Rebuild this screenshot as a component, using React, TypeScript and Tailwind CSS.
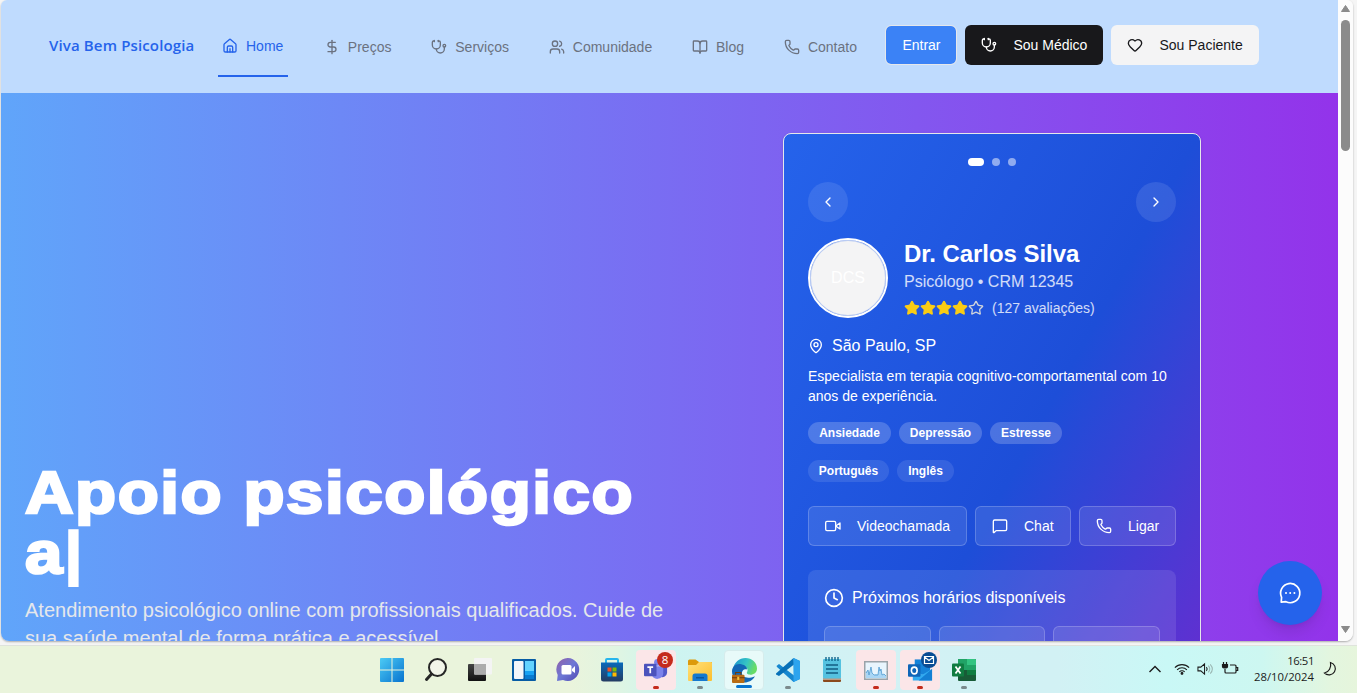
import React from "react";
import {
  BookOpen, ChevronLeft, ChevronRight, Clock, DollarSign, Heart, MapPin, MessageSquare, Phone, Star,
  Stethoscope, Users,
} from "lucide-react";

const House = () => (
  <svg width="16" height="16" viewBox="0 0 24 24" fill="none" stroke="currentColor" strokeWidth="2" strokeLinecap="round" strokeLinejoin="round">
    <path d="M3 10a2 2 0 0 1 .7-1.5l7-6a2 2 0 0 1 2.6 0l7 6A2 2 0 0 1 21 10v9a2 2 0 0 1-2 2H5a2 2 0 0 1-2-2z" />
    <path d="M8 21v-7a2 2 0 0 1 2-2h4a2 2 0 0 1 2 2v7M12 16v5" />
  </svg>
);

const VideoCamera = () => (
  <svg width="16" height="16" viewBox="0 0 24 24" fill="none" stroke="currentColor" strokeWidth="2" strokeLinecap="round" strokeLinejoin="round">
    <rect x="1" y="5" width="15" height="14" rx="2" />
    <path d="m16 12 6.500 4.500v-9z" />
  </svg>
);

const navItems = [
  { label: "Preços", icon: <DollarSign size={16} /> },
  { label: "Serviços", icon: <Stethoscope size={16} /> },
  { label: "Comunidade", icon: <Users size={16} /> },
  { label: "Blog", icon: <BookOpen size={16} /> },
  { label: "Contato", icon: <Phone size={16} /> },
];

function Header() {
  return (
    <header className="flex h-[93px] shrink-0 items-start bg-[#bfdbfe] pl-12 text-sm">
      <div className="mt-[33px] w-[145px] whitespace-nowrap font-['Open_Sans',sans-serif] text-[15px] font-semibold leading-6 tracking-[0.14px] text-[#2563eb]">
        Viva Bem Psicologia
      </div>
      <nav className="ml-6 flex gap-[31.85px] text-[#6b7280]">
        <a className="flex h-[77px] w-[70px] items-center gap-2 border-b-2 border-[#2563eb] px-1 pt-[17px] text-[#2563eb]">
          <House />
          Home
        </a>
        {navItems.map((n) => (
          <a key={n.label} className="flex h-[77px] items-center gap-2 px-1 pt-[17px]">
            {n.icon}
            {n.label}
          </a>
        ))}
      </nav>
      <div className="ml-[24.5px] mt-[25px] flex items-center gap-2">
        <button className="h-10 w-[72px] rounded-md border border-[#e5e7eb] bg-[#3b82f6] bg-clip-padding text-white">Entrar</button>
        <button className="flex h-10 w-[138px] items-center gap-4 whitespace-nowrap rounded-md bg-[#18181b] px-4 text-white">
          <Stethoscope size={16} className="shrink-0" />
          Sou Médico
        </button>
        <button className="flex h-10 w-[148px] items-center gap-4 whitespace-nowrap rounded-md bg-[#f4f4f5] px-4 text-[#18181b]">
          <Heart size={16} className="shrink-0" />
          Sou Paciente
        </button>
      </div>
    </header>
  );
}

function DoctorCard() {
  return (
    <section className="mt-10 h-[755px] w-[418px] shrink-0 rounded-lg border border-[#e5e7eb] bg-[linear-gradient(to_bottom_right,#2563eb,#1d4ed8,#7e22ce)] p-6 text-white shadow-sm">
      <div className="flex h-2 justify-center gap-2">
        <i className="w-4 rounded-full bg-white" />
        <i className="w-2 rounded-full bg-white/50" />
        <i className="w-2 rounded-full bg-white/50" />
      </div>
      <div className="mt-4 flex justify-between">
        <button className="flex size-10 items-center justify-center rounded-full bg-white/10"><ChevronLeft size={16} /></button>
        <button className="flex size-10 items-center justify-center rounded-full bg-white/10"><ChevronRight size={16} /></button>
      </div>
      <div className="mt-4 flex gap-4">
        <div className="flex size-20 items-center justify-center rounded-full border-2 border-white bg-[#f4f4f5] bg-clip-padding text-base ring-inset ring-1 ring-[#2563eb]/25">
          DCS
        </div>
        <div>
          <h2 className="text-2xl font-bold leading-8 tracking-[-0.05px]">Dr. Carlos Silva</h2>
          <p className="text-base leading-6 text-white/80">Psicólogo • CRM 12345</p>
          <div className="mt-1 flex h-5 items-center text-sm text-white/80">
            {[0, 1, 2, 3].map((i) => <Star key={i} size={16} className="fill-[#facc15] text-[#facc15]" />)}
            <Star size={16} className="text-[#d1d5db]" />
            <span className="ml-2">(127 avaliações)</span>
          </div>
        </div>
      </div>
      <div className="mt-4 flex items-center gap-2 text-base leading-6"><MapPin size={16} />São Paulo, SP</div>
      <p className="mt-2 text-sm leading-5">Especialista em terapia cognitivo-comportamental com 10 anos de experiência.</p>
      <div className="mt-4 flex gap-2 text-xs font-bold leading-[22px]">
        <span className="w-[83px] rounded-full bg-white/20 text-center">Ansiedade</span>
        <span className="w-[83px] rounded-full bg-white/20 text-center">Depressão</span>
        <span className="w-[72px] rounded-full bg-white/20 text-center">Estresse</span>
      </div>
      <div className="mt-4 flex gap-2 text-xs font-bold leading-[22px]">
        <span className="w-[81px] rounded-full bg-white/10 text-center">Português</span>
        <span className="w-[57px] rounded-full bg-white/10 text-center">Inglês</span>
      </div>
      <div className="mt-6 flex h-10 gap-2 text-sm">
        <button className="flex w-[159px] items-center gap-4 rounded-md border border-white/20 bg-white/10 pl-4"><VideoCamera />Videochamada</button>
        <button className="flex w-[96px] items-center gap-4 rounded-md border border-white/20 bg-white/10 pl-4"><MessageSquare size={16} />Chat</button>
        <button className="flex w-[97px] items-center gap-4 rounded-md border border-white/20 bg-white/10 pl-4"><Phone size={16} />Ligar</button>
      </div>
      <div className="mt-6 h-[200px] rounded-lg bg-white/10 p-4">
        <div className="flex items-center gap-2 text-base leading-6"><Clock size={20} />Próximos horários disponíveis</div>
        <div className="mt-4 grid grid-cols-3 gap-2">
          {[0, 1, 2].map((i) => <div key={i} className="h-10 rounded-md border border-white/20 bg-white/10" />)}
        </div>
      </div>
    </section>
  );
}

function Hero() {
  return (
    <main className="relative flex min-h-0 flex-1 items-start overflow-hidden bg-[linear-gradient(to_right,#60a5fa,#9333ea)]">
      <div className="w-[782px] shrink-0 pl-6 pt-[370px]">
        <h1 className="w-[620px] origin-left scale-x-[1.12] whitespace-nowrap text-[60px] font-bold leading-[60px] tracking-[1.4px] text-white [-webkit-text-stroke:2.5px_white]">
          Apoio psicológico
          <br />
          a<span className="[-webkit-text-stroke:1.5px_white]">|</span>
        </h1>
        <p className="mt-[13px] w-[660px] text-xl leading-7 text-[#e5e7eb]">
          Atendimento psicológico online com profissionais qualificados. Cuide de sua saúde mental de forma prática e acessível.
        </p>
      </div>
      <DoctorCard />
      <button className="absolute bottom-4 right-4 flex size-16 items-center justify-center rounded-full bg-[#2563eb] text-white shadow-lg">
        <svg width="24" height="24" viewBox="0 0 24 24" fill="none" stroke="currentColor" strokeWidth="1.700" strokeLinejoin="round">
          <path d="M3.200 21.200 3.600 16.300A9.600 9.600 0 1 1 8 20.700z" />
          <path d="M8 12h.01M12.200 12h.01M16.400 12h.01" strokeLinecap="round" strokeWidth="2" />
        </svg>
      </button>
    </main>
  );
}

function Scrollbar() {
  return (
    <div className="flex w-[15px] flex-col items-center bg-[#fcfcfc] pt-[5px]">
      <svg width="9" height="7" viewBox="0 0 9 7"><path d="M4.500 0.500 8.500 6.500H.5z" fill="#8b8b8b" stroke="#8b8b8b" strokeLinejoin="round" /></svg>
      <i className="mt-2 h-[131px] w-[9px] rounded-full bg-[#8b8b8b]" />
      <svg className="mb-[8px] mt-auto" width="9" height="7" viewBox="0 0 9 7"><path d="M4.500 6.500 8.500 .5H.5z" fill="#8b8b8b" stroke="#8b8b8b" strokeLinejoin="round" /></svg>
    </div>
  );
}

const WindowsLogo = () => (
  <svg width="24" height="24" viewBox="0 0 24 24">
    <defs><linearGradient id="win" x1="0" y1="0" x2="1" y2="1"><stop stopColor="#4ccbf5" /><stop offset="1" stopColor="#0873cf" /></linearGradient></defs>
    <path fill="url(#win)" d="M1 0h10.5v11.5H0V1a1 1 0 0 1 1-1zM12.5 0H23a1 1 0 0 1 1 1v10.5H12.5zM0 12.5h11.5V24H1a1 1 0 0 1-1-1zM12.5 12.5H24V23a1 1 0 0 1-1 1H12.5z" />
  </svg>
);
const SearchIcon = () => (
  <svg width="24" height="24" viewBox="0 0 24 24" fill="none" stroke="#262626">
    <circle cx="13.5" cy="9.5" r="8.5" strokeWidth="2" fill="#f2f5e9" /><path d="m7.5 16-5 5.5" strokeWidth="3" strokeLinecap="round" />
  </svg>
);
const TaskView = () => (
  <svg width="24" height="24" viewBox="0 0 24 24">
    <defs><linearGradient id="tv" x1="0" y1="0" x2="0" y2="1"><stop stopColor="#444" /><stop offset="1" stopColor="#111" /></linearGradient></defs>
    <rect y="6" width="18" height="17" rx="1" fill="url(#tv)" /><rect x="6" width="18" height="16.500" rx="1" fill="#f4f4f4" /><path d="M6 6h12v10.500H7a1 1 0 0 1-1-1z" fill="#acacac" />
  </svg>
);
const Widgets = () => (
  <svg width="24" height="22" viewBox="0 0 24 22">
    <rect width="24" height="22" rx="1" fill="#075ca5" /><rect x="2" y="2" width="9.500" height="18" rx="1" fill="#f3f6fa" />
    <path d="M13 2h9v10h-9z" fill="#63d3ff" /><path d="M13 12h9v4h-9z" fill="#16a1f3" /><path d="M13 16h9v4h-9z" fill="#087bd1" />
  </svg>
);
const ChatIcon = () => (
  <svg width="24" height="24" viewBox="0 0 24 24">
    <defs><linearGradient id="ch" x1="0" y1="0" x2="1" y2="1"><stop stopColor="#9360a8" /><stop offset=".5" stopColor="#6d78d6" /><stop offset="1" stopColor="#5149b2" /></linearGradient></defs>
    <path d="M12 0a11.500 11.500 0 1 1-5 22L1 23l.7-6A11.500 11.500 0 0 1 12 0z" fill="url(#ch)" />
    <rect x="5.500" y="7" width="10" height="9.500" rx="1.500" fill="#fff" /><path d="m16 11 3-3v7l-3-2z" fill="#fff" />
  </svg>
);
const StoreIcon = () => (
  <svg width="24" height="24" viewBox="0 0 24 24">
    <defs><linearGradient id="st" x1="0" y1="0" x2="0" y2="1"><stop stopColor="#0969ba" /><stop offset="1" stopColor="#243c62" /></linearGradient></defs>
    <path d="M6 8V2q0-1 1-1h10q1 0 1 1v6" fill="none" stroke="#26b5ed" strokeWidth="2" />
    <path d="M1 4.500h22V21q0 2.500-2.500 2.500h-17Q1 23.500 1 21z" fill="url(#st)" />
    <path fill="#f25022" d="M7.500 9.500h4v4h-4z" /><path fill="#7fba00" d="M12.500 9.500h4v4h-4z" /><path fill="#00a4ef" d="M7.500 14.500h4v4h-4z" /><path fill="#ffb900" d="M12.500 14.500h4v4h-4z" />
  </svg>
);
const TeamsIcon = () => (
  <svg width="25" height="24" viewBox="0 0 26 24">
    <circle cx="14" cy="4" r="3.500" fill="#7b83eb" /><path d="M17 8h7v7a5 5 0 0 1-7 4z" fill="#5059c9" /><path d="M8 8h12v8a6.200 6.200 0 0 1-12 1z" fill="#7b83eb" />
    <rect y="5.500" width="13" height="13" rx="1" fill="#4b53bc" /><path d="M3.500 9h6M6.500 9v6.500" stroke="#fff" strokeWidth="1.800" />
  </svg>
);
const FolderIcon = () => (
  <svg width="24" height="24" viewBox="0 0 24 24">
    <defs><linearGradient id="fo" x1="0" y1="0" x2="1" y2="1"><stop stopColor="#ffe07a" /><stop offset="1" stopColor="#fcbf2e" /></linearGradient></defs>
    <path d="M0 3q0-1.500 1.500-1.500h6L11 4H24v8H0z" fill="#dc9a0c" /><path d="M0 7h8l3-3h12q1 0 1 1v17q0 1-1 1H1q-1 0-1-1z" fill="url(#fo)" />
    <path d="M4.500 23v-5q0-2.500 2.500-2.500h10q2.500 0 2.500 2.500v5z" fill="#1579cf" /><path d="M8 19h8v1.500H8z" fill="#0c579c" />
  </svg>
);
const EdgeIcon = () => (
  <svg width="25" height="25" viewBox="0 0 24 24">
    <defs><linearGradient id="ed" x1="0" y1="0" x2="1" y2=".3"><stop stopColor="#1690d2" /><stop offset=".6" stopColor="#35c4c4" /><stop offset="1" stopColor="#68dc66" /></linearGradient></defs>
    <path d="M1 11C2 4 7 0 13 0c6 0 11 4.500 11 10 0 4-3 6-6.500 6-2 0-4-1-3-2.500C16 11 14 8 10 8c-4 0-7 1.500-9 3z" fill="url(#ed)" />
    <path d="M0 13c0-5 4-8 9-7 4 .8 5.500 3 5.500 5-3-1-5 1-5 3.500 0 4 5.500 6 12.500 3-2 4-6 6-10 6C5 23.500 0 19 0 13z" fill="#1267b5" />
    <rect y="16" width="12" height="8" rx="1" fill="#b96b13" /><path d="M3.500 16v-2h5v2M0 19h12" fill="none" stroke="#703c09" /><path d="M5 18h2v3H5z" fill="#f5c542" />
  </svg>
);
const CodeIcon = () => (
  <svg width="24" height="24" viewBox="0 0 24 24">
    <path d="M17.500 0 24 3v18l-6.500 3L1 9l-.5-1L3 6l15 11.500z" fill="#1687cf" /><path d="M17.500 0 0 15.500v1L3 18 18 6.500z" fill="#0871b8" /><path d="M17.500 0 24 3v18l-6.500 3z" fill="#2ca4ee" />
  </svg>
);
const NotepadIcon = () => (
  <svg width="20" height="26" viewBox="0 0 20 26">
    <path d="M1 21h18v3q0 1-1 1H2q-1 0-1-1z" fill="#8b4a1d" /><path d="M1 21.500h18v1H1z" fill="#eee" /><rect x="1" y="2" width="18" height="19.500" rx="1" fill="#55c2e0" />
    <path d="M4 0v4M7 0v4M10 0v4M13 0v4M16 0v4" stroke="#11678e" strokeWidth="1.400" /><path d="M4 8h12M4 12h12M4 16h12" stroke="#125d83" strokeWidth="1.700" />
  </svg>
);
const MonitorIcon = () => (
  <svg width="24" height="19" viewBox="0 0 24 19">
    <rect x=".75" y=".75" width="22.500" height="17.500" fill="#e8f5fd" stroke="#9aa3a9" strokeWidth="1.500" /><path d="M2 17v-6l2-2 1 5 2-8 1 6 2 2 2-1 2 1 1-8 1 4 1-2 1 6 2-1 2 2v2z" fill="#a9d6f5" /><path d="m2 12 2-3 1 5 2-8 1 6 2 2h4l1-8 1 4 1-2 1 6 2-1 2 2" fill="none" stroke="#4f9ad0" strokeWidth=".8" />
  </svg>
);
const OutlookIcon = () => (
  <svg width="25" height="24" viewBox="0 0 26 24">
    <path d="M7 1h16v16H7z" fill="#1683d8" /><path d="M5 11l10 6 10-6v12H5z" fill="#31aaf0" /><path d="m25 11-14 12h14z" fill="#1480d4" /><rect y="6" width="13" height="13" rx="1" fill="#0f65b8" />
    <ellipse cx="6.500" cy="12.500" rx="3" ry="3.500" fill="none" stroke="#fff" strokeWidth="1.700" />
  </svg>
);
const ExcelIcon = () => (
  <svg width="24" height="22" viewBox="0 0 24 22">
    <rect x="6" width="18" height="22" rx="1" fill="#185c37" /><path d="M6 0h9v11H6z" fill="#21a366" /><path d="M15 0h8q1 0 1 1v5h-9z" fill="#33c481" /><path d="M15 6h9v5h-9z" fill="#21a366" /><path d="M15 11h9v5h-9z" fill="#107c41" />
    <rect y="4.500" width="12" height="13" rx="1" fill="#107c41" /><path d="m3.500 7.500 5 7M8.500 7.500l-5 7" stroke="#fff" strokeWidth="1.800" />
  </svg>
);

type App = { name: string; icon: React.ReactNode; tile?: string; dot?: string; badge?: React.ReactNode };
const apps: App[] = [
  { name: "start", icon: <WindowsLogo /> },
  { name: "search", icon: <SearchIcon /> },
  { name: "tasks", icon: <TaskView /> },
  { name: "widgets", icon: <Widgets /> },
  { name: "chat", icon: <ChatIcon /> },
  { name: "store", icon: <StoreIcon /> },
  {
    name: "teams", icon: <TeamsIcon />, tile: "bg-[#fbe6e8]", dot: "w-1.5 bg-[#c42b1c]",
    badge: <span className="absolute right-[3px] top-[2px] flex size-4 items-center justify-center rounded-full bg-[#c42b1c] font-['Open_Sans',sans-serif] text-[11.5px] text-white">8</span>,
  },
  { name: "files", icon: <FolderIcon />, dot: "w-1.5 bg-[#7b8a8c]" },
  { name: "edge", icon: <EdgeIcon />, tile: "bg-[#e8faf9] border border-[#d6ecec]", dot: "w-4 bg-[#0873cf]" },
  { name: "code", icon: <CodeIcon />, dot: "w-1.5 bg-[#7b8a8c]" },
  { name: "notepad", icon: <NotepadIcon /> },
  { name: "monitor", icon: <MonitorIcon />, tile: "bg-[#fbe6e8]", dot: "w-1.5 bg-[#c42b1c]" },
  {
    name: "outlook", icon: <OutlookIcon />, tile: "bg-[#fbe6e8]", dot: "w-1.5 bg-[#c42b1c]",
    badge: (
      <svg className="absolute right-[3px] top-[2px]" width="16" height="16" viewBox="0 0 16 16"><circle cx="8" cy="8" r="8" fill="#0b4c94" /><path d="M3.500 4.500h9v7h-9zM3.500 5 8 8.500 12.500 5" fill="none" stroke="#fff" strokeWidth="1.200" /></svg>
    ),
  },
  { name: "excel", icon: <ExcelIcon />, dot: "w-1.5 bg-[#7b8a8c]" },
];

function Taskbar() {
  return (
    <footer className="flex h-12 items-start border-t border-[#dfe3dc] bg-[linear-gradient(to_right,#eaf4dc_0%,#eaf4dc_42%,#e2f5e1_45%,#cdf5f0_49%,#d2f2f4_55%,#d2f1f4_78%,#c9f8f6_86%,#cdf7f1_93%,#e3f6df_98%,#e6f5dc_100%)] pl-[372px] pt-[4px]">
      <div className="flex gap-1">
        {apps.map((a) => (
          <div key={a.name} className={`relative flex h-10 w-10 items-center justify-center rounded ${a.tile ?? ""}`}>
            {a.icon}
            {a.badge}
            {a.dot && <i className={`absolute bottom-[1px] h-[3px] rounded-full ${a.dot}`} />}
          </div>
        ))}
      </div>
      <div className="ml-auto flex h-[38px] items-center pr-5 text-[#1b1b1b]">
        <svg width="14" height="14" viewBox="0 0 14 14" fill="none" stroke="currentColor" strokeWidth="1.400"><path d="m1.500 10 5.500-5.500L12.500 10" /></svg>
        <svg className="ml-3" width="16" height="14" viewBox="0 0 18 14" fill="none" stroke="currentColor" strokeWidth="1.200"><path d="M1 5.500a11 11 0 0 1 16 0M3.500 8a7.500 7.500 0 0 1 11 0M6 10.200a4.200 4.200 0 0 1 6 0" /><circle cx="9" cy="12" r="1" fill="currentColor" /></svg>
        <svg className="ml-[7px]" width="17" height="14" viewBox="0 0 18 14" fill="none" stroke="currentColor" strokeWidth="1.100"><path d="M1 5v4h3l4 3.500v-11L4 5zM10 5q1.500 2 0 4" /><path d="M12 3.500q3 3.500 0 7M14 2q4.500 5 0 10" stroke="#9ab5b1" /></svg>
        <svg className="ml-[7px]" width="18" height="14" viewBox="0 0 18 14" fill="none" stroke="currentColor" strokeWidth="1.200"><path d="M9 3h5q1 0 1 1v6q0 1-1 1H5q-1 0-1-1V7M15.500 5.500h1.200v3h-1.200" /><path d="M1.500 2.500h5v2q0 1.500-1.500 1.500H3Q1.500 6 1.500 4.500zM2.500 0v3M5.500 0v3" fill="currentColor" /></svg>
        <div className="ml-[11px] w-[64px] text-right font-['Open_Sans',sans-serif] text-[11.300px] leading-4">
          <div className="tracking-[-0.4px]">16:51</div>
          <div className="whitespace-nowrap">28/10/2024</div>
        </div>
        <svg className="ml-[9px]" width="14" height="16" viewBox="0 0 14 16" fill="none" stroke="currentColor" strokeWidth="1.200"><path d="M7.500 1.500a6.300 6.300 0 1 1-6 10.500C6 11 8.500 6.500 7.500 1.500z" /></svg>
      </div>
    </footer>
  );
}

export default function App() {
  return (
    <div className="flex h-[693px] w-[1357px] flex-col overflow-hidden bg-[#f5f5f5] font-['Liberation_Sans',Arial,sans-serif]">
      <div className="ml-px mb-1 flex h-[641px] w-[1352px] overflow-hidden rounded-b-lg rounded-t-md shadow-[0_1px_2px_rgba(0,0,0,0.3)]">
        <div className="flex w-[1337px] flex-col">
          <Header />
          <Hero />
        </div>
        <Scrollbar />
      </div>
      <Taskbar />
    </div>
  );
}
